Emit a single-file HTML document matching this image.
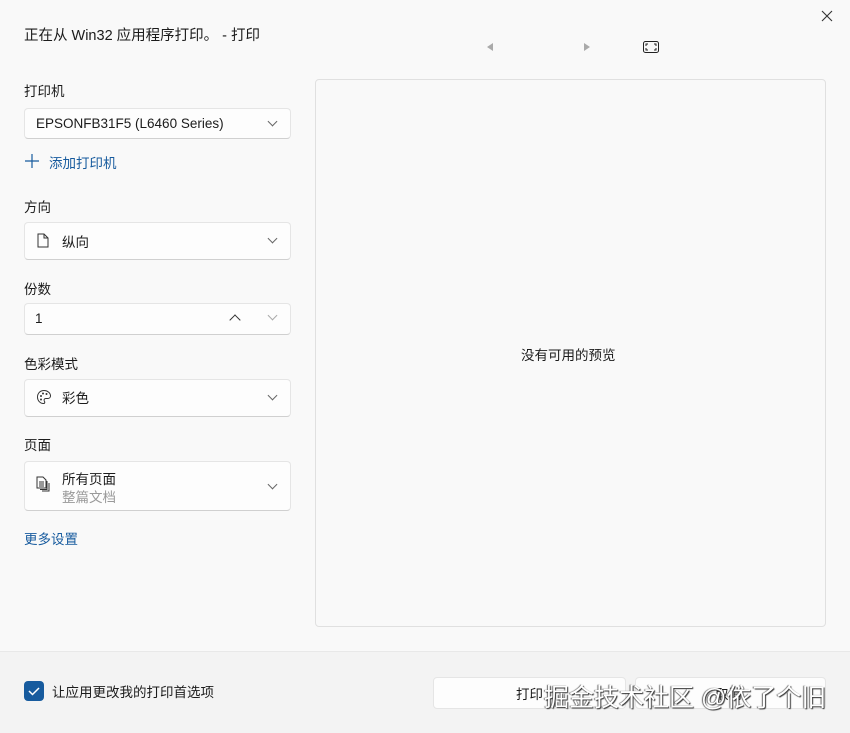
<!DOCTYPE html><html><head><meta charset="utf-8"><style>
body{margin:0;width:850px;height:732px;background:#f9f9f9;font-family:"Liberation Sans","Noto Sans CJK SC",sans-serif;color:#1b1b1b;position:relative;overflow:hidden;font-size:13px}
.a{position:absolute}
.box{position:absolute;left:24px;width:265px;background:#fdfdfd;border:1px solid #e5e5e5;border-bottom-color:#d0d0d0;border-radius:4px}
.lbl{position:absolute;left:24px;font-size:13.5px}
.chev{position:absolute;right:14px;width:6px;height:6px;border-right:1px solid #666;border-bottom:1px solid #666;transform:rotate(45deg)}
.t{position:absolute;left:37px;font-size:13.5px}
</style></head><body>
<div class="a" style="left:24px;top:24px;font-size:14.5px">正在从 Win32 应用程序打印。 - 打印</div>
<svg class="a" style="left:821px;top:10px" width="12" height="12"><path d="M1 1L11 11M11 1L1 11" stroke="#333" stroke-width="1.1"/></svg>
<div class="a" style="left:487px;top:43px;width:0;height:0;border-top:4px solid transparent;border-bottom:4px solid transparent;border-right:6px solid #aaa"></div>
<div class="a" style="left:584px;top:43px;width:0;height:0;border-top:4px solid transparent;border-bottom:4px solid transparent;border-left:6px solid #aaa"></div>
<svg class="a" style="left:643px;top:41px" width="16" height="12"><rect x="0.5" y="0.5" width="15" height="11" rx="2" fill="none" stroke="#222"/><path d="M3 5V3h2M11 3h2v2M13 7v2h-2M5 9H3V7" fill="none" stroke="#222"/></svg>
<div class="lbl" style="top:80px">打印机</div>
<div class="box" style="top:108px;height:29px"><div class="a" style="left:11px;top:7px;font-size:13.5px">EPSONFB31F5 (L6460 Series)</div><div class="chev" style="top:9px"></div></div>
<svg class="a" style="left:25px;top:154px" width="14" height="14"><path d="M7 0v14M0 7h14" stroke="#175b9e" stroke-width="1.2"/></svg>
<div class="a" style="left:49px;top:152px;font-size:13.5px;color:#175b9e">添加打印机</div>
<div class="lbl" style="top:196px">方向</div>
<div class="box" style="top:222px;height:36px"><svg class="a" style="left:12px;top:10px" width="12" height="15"><path d="M1 1h6l4 4v9H1z M7 1v4h4" fill="none" stroke="#333"/></svg><div class="t" style="top:8px">纵向</div><div class="chev" style="top:12px"></div></div>
<div class="lbl" style="top:278px">份数</div>
<div class="box" style="top:303px;height:30px"><div class="a" style="left:10px;top:7px;font-size:13.5px">1</div><div class="a" style="left:206px;top:12px;width:7px;height:7px;border-left:1px solid #333;border-top:1px solid #333;transform:rotate(45deg)"></div><div class="chev" style="top:8px;border-color:#aaa"></div></div>
<div class="lbl" style="top:353px">色彩模式</div>
<div class="box" style="top:379px;height:36px"><svg class="a" style="left:11px;top:9px" width="16" height="16"><path d="M8 1.5C4 1.5 1.5 4.5 1.5 8s2.5 6.5 6 6.5c1.5 0 1.5-1.5.8-2.5-.7-1 0-2.5 1.5-2.5h2c1.5 0 2.7-1 2.7-2.5C14.5 4 11.5 1.5 8 1.5z" fill="none" stroke="#333"/><circle cx="5" cy="7" r="1" fill="#333"/><circle cx="7" cy="4.5" r="1" fill="#333"/><circle cx="10.5" cy="5" r="1" fill="#333"/><circle cx="5" cy="10.5" r="1" fill="#333"/></svg><div class="t" style="top:7px">彩色</div><div class="chev" style="top:12px"></div></div>
<div class="lbl" style="top:434px">页面</div>
<div class="box" style="top:461px;height:48px"><svg class="a" style="left:11px;top:14px" width="14" height="16"><path d="M1 1h6l3 3v8H1z M3 6h5M3 8h5M3 10h5 M11 5v8.5H4 M13 7v8H6" fill="none" stroke="#333"/></svg><div class="t" style="top:6px">所有页面</div><div class="t" style="top:24px;color:#999">整篇文档</div><div class="chev" style="top:19px"></div></div>
<div class="a" style="left:24px;top:528px;font-size:13.5px;color:#175b9e">更多设置</div>
<div class="a" style="left:315px;top:79px;width:509px;height:546px;border:1px solid #e0e0e0;border-radius:4px;background:#f9f9f9"></div>
<div class="a" style="left:521px;top:344px;font-size:13.5px">没有可用的预览</div>
<div class="a" style="left:0;top:651px;width:850px;height:81px;background:#f3f3f3;border-top:1px solid #e8e8e8"></div>
<div class="a" style="left:24px;top:681px;width:20px;height:20px;background:#175b9e;border-radius:4px"><svg width="20" height="20"><path d="M5 10l3.5 3.5L15 7" fill="none" stroke="#fff" stroke-width="1.5"/></svg></div>
<div class="a" style="left:52px;top:681px;font-size:13.5px">让应用更改我的打印首选项</div>
<div class="a" style="left:433px;top:677px;width:191px;height:30px;background:#fdfdfd;border:1px solid #e5e5e5;border-radius:4px"></div>
<div class="a" style="left:635px;top:677px;width:189px;height:30px;background:#fdfdfd;border:1px solid #e5e5e5;border-radius:4px"></div>
<div class="a" style="left:516px;top:683px;font-size:13.5px">打印</div>
<div class="a" style="left:715px;top:683px;font-size:13.5px">取消</div>
<div class="a" style="left:544px;top:678px;font-size:25px;color:#fff;text-shadow:1px 1px 1px #333,-1px 0 1px #666">掘金技术社区 @依了个旧</div>
</body></html>
